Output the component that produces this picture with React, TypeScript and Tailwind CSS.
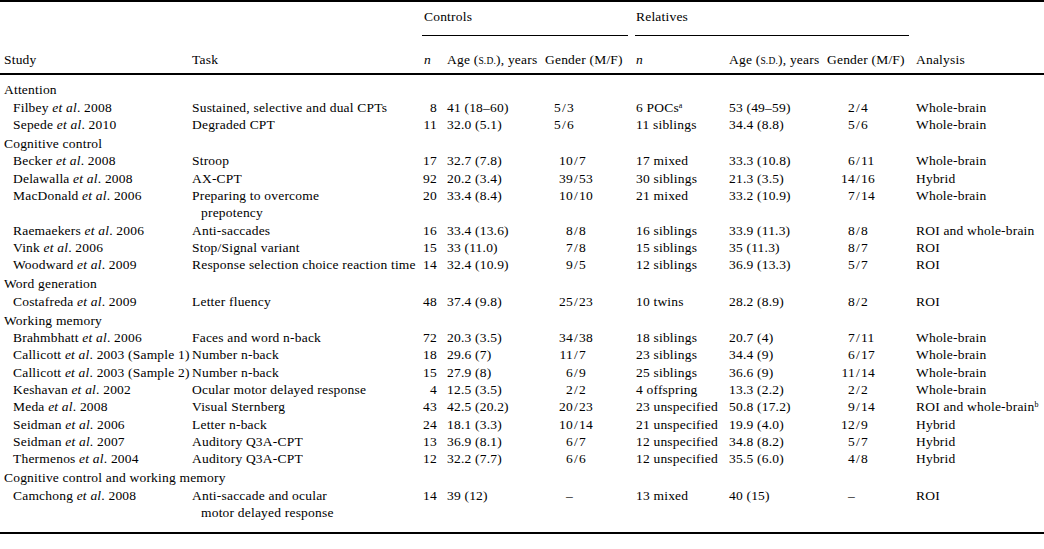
import React from 'react';

type Row = {
    name: string;
    year: string;
    suffix?: string;
    task: string[];
    cn: string;
    cAge: string;
    cg: [string, string];
    rn: string;
    sup?: string;
    rAge: string;
    rg: [string, string];
    analysis: string;
    asup?: string;
};

type Section = { title: string; narrow?: boolean; rows: Row[] };

const sections: Section[] = [
    {
        title: 'Attention',
        narrow: true,
        rows: [
            { name: 'Filbey', year: '2008', task: ['Sustained, selective and dual CPTs'], cn: '8', cAge: '41 (18–60)', cg: ['5', '3'], rn: '6 POCs', sup: 'a', rAge: '53 (49–59)', rg: ['2', '4'], analysis: 'Whole-brain' },
            { name: 'Sepede', year: '2010', task: ['Degraded CPT'], cn: '11', cAge: '32.0 (5.1)', cg: ['5', '6'], rn: '11 siblings', rAge: '34.4 (8.8)', rg: ['5', '6'], analysis: 'Whole-brain' },
        ],
    },
    {
        title: 'Cognitive control',
        rows: [
            { name: 'Becker', year: '2008', task: ['Stroop'], cn: '17', cAge: '32.7 (7.8)', cg: ['10', '7'], rn: '17 mixed', rAge: '33.3 (10.8)', rg: ['6', '11'], analysis: 'Whole-brain' },
            { name: 'Delawalla', year: '2008', task: ['AX-CPT'], cn: '92', cAge: '20.2 (3.4)', cg: ['39', '53'], rn: '30 siblings', rAge: '21.3 (3.5)', rg: ['14', '16'], analysis: 'Hybrid' },
            { name: 'MacDonald', year: '2006', task: ['Preparing to overcome', 'prepotency'], cn: '20', cAge: '33.4 (8.4)', cg: ['10', '10'], rn: '21 mixed', rAge: '33.2 (10.9)', rg: ['7', '14'], analysis: 'Whole-brain' },
            { name: 'Raemaekers', year: '2006', task: ['Anti-saccades'], cn: '16', cAge: '33.4 (13.6)', cg: ['8', '8'], rn: '16 siblings', rAge: '33.9 (11.3)', rg: ['8', '8'], analysis: 'ROI and whole-brain' },
            { name: 'Vink', year: '2006', task: ['Stop/Signal variant'], cn: '15', cAge: '33 (11.0)', cg: ['7', '8'], rn: '15 siblings', rAge: '35 (11.3)', rg: ['8', '7'], analysis: 'ROI' },
            { name: 'Woodward', year: '2009', task: ['Response selection choice reaction time'], cn: '14', cAge: '32.4 (10.9)', cg: ['9', '5'], rn: '12 siblings', rAge: '36.9 (13.3)', rg: ['5', '7'], analysis: 'ROI' },
        ],
    },
    {
        title: 'Word generation',
        rows: [
            { name: 'Costafreda', year: '2009', task: ['Letter fluency'], cn: '48', cAge: '37.4 (9.8)', cg: ['25', '23'], rn: '10 twins', rAge: '28.2 (8.9)', rg: ['8', '2'], analysis: 'ROI' },
        ],
    },
    {
        title: 'Working memory',
        rows: [
            { name: 'Brahmbhatt', year: '2006', task: ['Faces and word n-back'], cn: '72', cAge: '20.3 (3.5)', cg: ['34', '38'], rn: '18 siblings', rAge: '20.7 (4)', rg: ['7', '11'], analysis: 'Whole-brain' },
            { name: 'Callicott', year: '2003', suffix: '(Sample 1)', task: ['Number n-back'], cn: '18', cAge: '29.6 (7)', cg: ['11', '7'], rn: '23 siblings', rAge: '34.4 (9)', rg: ['6', '17'], analysis: 'Whole-brain' },
            { name: 'Callicott', year: '2003', suffix: '(Sample 2)', task: ['Number n-back'], cn: '15', cAge: '27.9 (8)', cg: ['6', '9'], rn: '25 siblings', rAge: '36.6 (9)', rg: ['11', '14'], analysis: 'Whole-brain' },
            { name: 'Keshavan', year: '2002', task: ['Ocular motor delayed response'], cn: '4', cAge: '12.5 (3.5)', cg: ['2', '2'], rn: '4 offspring', rAge: '13.3 (2.2)', rg: ['2', '2'], analysis: 'Whole-brain' },
            { name: 'Meda', year: '2008', task: ['Visual Sternberg'], cn: '43', cAge: '42.5 (20.2)', cg: ['20', '23'], rn: '23 unspecified', rAge: '50.8 (17.2)', rg: ['9', '14'], analysis: 'ROI and whole-brain', asup: 'b' },
            { name: 'Seidman', year: '2006', task: ['Letter n-back'], cn: '24', cAge: '18.1 (3.3)', cg: ['10', '14'], rn: '21 unspecified', rAge: '19.9 (4.0)', rg: ['12', '9'], analysis: 'Hybrid' },
            { name: 'Seidman', year: '2007', task: ['Auditory Q3A-CPT'], cn: '13', cAge: '36.9 (8.1)', cg: ['6', '7'], rn: '12 unspecified', rAge: '34.8 (8.2)', rg: ['5', '7'], analysis: 'Hybrid' },
            { name: 'Thermenos', year: '2004', task: ['Auditory Q3A-CPT'], cn: '12', cAge: '32.2 (7.7)', cg: ['6', '6'], rn: '12 unspecified', rAge: '35.5 (6.0)', rg: ['4', '8'], analysis: 'Hybrid' },
        ],
    },
    {
        title: 'Cognitive control and working memory',
        rows: [
            { name: 'Camchong', year: '2008', task: ['Anti-saccade and ocular', 'motor delayed response'], cn: '14', cAge: '39 (12)', cg: ['–', ''], rn: '13 mixed', rAge: '40 (15)', rg: ['–', ''], analysis: 'ROI' },
        ],
    },
];

// gender M/F cell, lined up on the slash
function Ratio({ v, narrow, rel }: { v: [string, string]; narrow?: boolean; rel?: boolean }) {
    const left = rel ? 'w-[24px]' : narrow ? 'w-[12px]' : 'w-[24px]';
    return (
        <div className="flex whitespace-nowrap">
            <span className={`${left} text-right`}>{v[0]}</span>
            {v[1] && <span className="px-[1px]">/</span>}
            <span>{v[1]}</span>
        </div>
    );
}

function DataRow({ r, narrow }: { r: Row; narrow?: boolean }) {
    return (
        <div className="flex">
            <div className="w-[192px] shrink-0 pl-[13px] whitespace-nowrap">
                {r.name} <i>et al</i>. {r.year}
                {r.suffix ? ` ${r.suffix}` : ''}
            </div>
            <div className="w-[212px] shrink-0 whitespace-nowrap">
                {r.task.map((t, i) => (
                    <div key={i} className={i ? 'pl-[9px]' : ''}>
                        {t}
                    </div>
                ))}
            </div>
            <div className="w-[33px] shrink-0 text-right">{r.cn}</div>
            <div className="w-[108px] shrink-0 pl-[10px] whitespace-nowrap">{r.cAge}</div>
            <div className="w-[91px] shrink-0 pl-[4px]">
                <Ratio v={r.cg} narrow={narrow} />
            </div>
            <div className="w-[93px] shrink-0 whitespace-nowrap">
                {r.rn}
                {r.sup && <sup className="text-[8px]">{r.sup}</sup>}
            </div>
            <div className="w-[98px] shrink-0 whitespace-nowrap">{r.rAge}</div>
            <div className="w-[89px] shrink-0 pl-[4px]">
                <Ratio v={r.rg} rel />
            </div>
            <div className="flex-1 whitespace-nowrap">
                {r.analysis}
                {r.asup && <sup className="text-[8px]">{r.asup}</sup>}
            </div>
        </div>
    );
}

export default function App() {
    return (
        <div className="w-[1044px] h-[549px] bg-white text-black [font-family:'Liberation_Serif',serif] text-[13.5px] tracking-[0.2px] leading-[17.4px] overflow-hidden">
            <div className="h-[2px] bg-black" />

            {/* group headings */}
            <div className="flex pt-[6px]">
                <div className="w-[424px] shrink-0" />
                <div className="w-[212px] shrink-0">Controls</div>
                <div>Relatives</div>
            </div>
            <div className="flex mt-[10px]">
                <div className="ml-[422px] w-[206px] h-px bg-black" />
                <div className="ml-[7px] w-[274px] h-px bg-black" />
            </div>

            {/* column headings */}
            <div className="flex pt-[15px]">
                <div className="w-[192px] shrink-0 pl-[4px]">Study</div>
                <div className="w-[232px] shrink-0">Task</div>
                <div className="w-[23px] shrink-0">
                    <i>n</i>
                </div>
                <div className="w-[98px] shrink-0 whitespace-nowrap">
                    Age (<span className="text-[9.5px]">S.D.</span>), years
                </div>
                <div className="w-[91px] shrink-0 whitespace-nowrap">Gender (M/F)</div>
                <div className="w-[93px] shrink-0">
                    <i>n</i>
                </div>
                <div className="w-[98px] shrink-0 whitespace-nowrap">
                    Age (<span className="text-[9.5px]">S.D.</span>), years
                </div>
                <div className="w-[89px] shrink-0 whitespace-nowrap">Gender (M/F)</div>
                <div>Analysis</div>
            </div>
            <div className="mt-[2px] h-[2px] bg-black" />

            {/* body */}
            <div className="pt-[6.5px] leading-[17.35px]">
                {sections.map((s, si) => (
                    <div key={s.title} className={si ? 'pt-[1.6px]' : ''}>
                        <div className="pl-[4px]">{s.title}</div>
                        {s.rows.map((r, ri) => (
                            <DataRow key={ri} r={r} narrow={s.narrow} />
                        ))}
                    </div>
                ))}
            </div>
            <div className="mt-[11px] h-[2px] bg-black" />
        </div>
    );
}
